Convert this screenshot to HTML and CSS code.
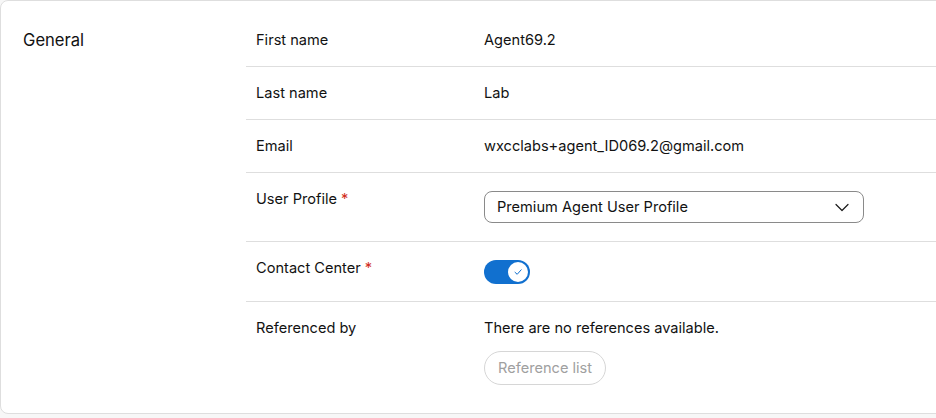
FILE: index.html
```html
<!DOCTYPE html>
<html>
<head>
<meta charset="utf-8">
<link rel="stylesheet" href="styles.css">
</head>
<body>
<section class="card">
  <h2 class="section-title">General</h2>
  <div class="fields">
    <div class="row">
      <div class="label">First name</div>
      <div class="value">Agent69.2</div>
    </div>
    <div class="row">
      <div class="label">Last name</div>
      <div class="value">Lab</div>
    </div>
    <div class="row">
      <div class="label">Email</div>
      <div class="value">wxcclabs+agent_ID069.2@gmail.com</div>
    </div>
    <div class="row">
      <div class="label">User Profile <span class="req">*</span></div>
      <div class="value">
        <div class="select">
          <span>Premium Agent User Profile</span>
          <svg class="chev" width="16" height="16" viewBox="0 0 16 16"><path d="M2 5.5 L8 11.5 L14 5.5" fill="none" stroke="#1a1a1a" stroke-width="1.2" stroke-linecap="round" stroke-linejoin="round"/></svg>
        </div>
      </div>
    </div>
    <div class="row">
      <div class="label">Contact Center <span class="req">*</span></div>
      <div class="value">
        <div class="toggle">
          <span class="knob">
            <svg width="10" height="10" viewBox="0 0 10 10"><path d="M2 5.3 L4.2 7.3 L8.2 2.8" fill="none" stroke="#1170cf" stroke-width="1" stroke-linecap="round" stroke-linejoin="round"/></svg>
          </span>
        </div>
      </div>
    </div>
    <div class="row last">
      <div class="label">Referenced by</div>
      <div class="value">
        <div>There are no references available.</div>
        <button class="pill" disabled>Reference list</button>
      </div>
    </div>
  </div>
</section>
</body>
</html>
```
FILE: styles.css
```css
html, body {
  margin: 0;
  padding: 0;
  background: #f7f7f7;
}
body {
  font-family: Inter, "Noto Sans", sans-serif;
  color: #121212;
  width: 936px;
  height: 418px;
  overflow: hidden;
}
.card {
  box-sizing: border-box;
  width: 946px;
  height: 414px;
  background: #fff;
  border: 1px solid #dedede;
  border-radius: 8px;
  display: flex;
  padding-top: 13px;
}
.section-title {
  margin: 0;
  width: 245px;
  padding-left: 22px;
  box-sizing: border-box;
  font-size: 16.6px;
  font-weight: 400;
  line-height: 24px;
  padding-top: 14px;
}
.fields {
  flex: 1;
}
.row {
  display: grid;
  grid-template-columns: 228px 1fr;
  padding: 16px 0 16px 10px;
  border-bottom: 1px solid #dedede;
  font-size: 14.6px;
  line-height: 20px;
}
.row.last {
  border-bottom: none;
}
.req {
  color: #d12d1d;
}
.select {
  box-sizing: border-box;
  margin: 2px 0;
  width: 380px;
  height: 32px;
  border: 1px solid #8a8a8a;
  border-radius: 8px;
  display: flex;
  align-items: center;
  justify-content: space-between;
  padding: 0 13px 0 12px;
}
.chev {
  display: block;
}
.toggle {
  margin: 2px 0 1px;
  width: 46px;
  height: 24px;
  border-radius: 12px;
  background: #1170cf;
  display: flex;
  align-items: center;
  justify-content: flex-end;
  padding: 0 2px;
  box-sizing: border-box;
}
.knob {
  width: 20px;
  height: 20px;
  border-radius: 50%;
  background: #fff;
  display: flex;
  align-items: center;
  justify-content: center;
}
.knob svg {
  display: block;
}
.pill {
  margin-top: 13px;
  height: 34px;
  padding: 0 13px;
  border: 1px solid #d6d6d6;
  border-radius: 17px;
  background: #fff;
  color: #a0a0a0;
  font-family: Inter, "Noto Sans", sans-serif;
  font-size: 14.6px;
}
```
